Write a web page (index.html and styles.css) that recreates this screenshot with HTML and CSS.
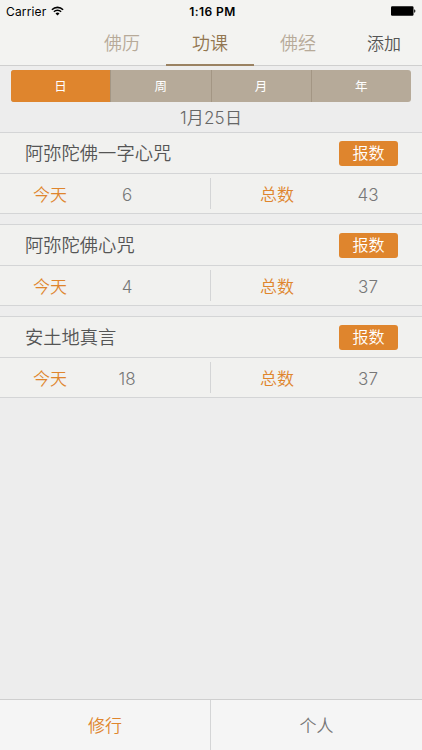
FILE: index.html
```
<!DOCTYPE html>
<html lang="zh-CN">
  <head>
    <meta charset="UTF-8">
    <meta name="viewport" content="width=device-width, initial-scale=1.0">
    <title>功课</title>
    <link rel="stylesheet" href="styles.css">
  </head>

  <body>
    <header class="header">
      <div class="status">
        <div class="carrier">
          <span>Carrier</span>
          <svg class="wifi" width="13" height="10" viewBox="0 0 13 10">
            <path d="M0.9 3.7a8 8 0 0 1 11.2 0M2.9 5.8a5.1 5.1 0 0 1 7.2 0" fill="none" stroke="#000" stroke-width="1.6"/>
            <path d="M6.5 9.4L4.5 7.4a2.9 2.9 0 0 1 4 0z"/>
          </svg>
        </div>
        <div class="clock">1:16 PM</div>
        <svg class="battery" width="26" height="10" viewBox="0 0 26 10">
          <rect x="1" y="0.3" width="22.5" height="9.4" rx="1.2"/>
          <path d="M24.2 3.2c1.6 0.5 1.6 3.1 0 3.6z"/>
        </svg>
      </div>
      <nav class="tabs">
        <a class="tab">佛历</a>
        <a class="tab tab-active">功课</a>
        <a class="tab">佛经</a>
        <a class="add">添加</a>
      </nav>
    </header>

    <main class="main">
      <div class="segments">
        <div class="segment segment-active">日</div>
        <div class="segment">周</div>
        <div class="segment">月</div>
        <div class="segment">年</div>
      </div>
      <div class="date">1月25日</div>

      <section class="card">
        <div class="card-top">
          <span class="card-title">阿弥陀佛一字心咒</span>
          <button class="report">报数</button>
        </div>
        <div class="card-stats">
          <div class="stat"><span class="stat-label">今天</span><span class="stat-value">6</span></div>
          <div class="stat"><span class="stat-label">总数</span><span class="stat-value">43</span></div>
        </div>
      </section>

      <section class="card">
        <div class="card-top">
          <span class="card-title">阿弥陀佛心咒</span>
          <button class="report">报数</button>
        </div>
        <div class="card-stats">
          <div class="stat"><span class="stat-label">今天</span><span class="stat-value">4</span></div>
          <div class="stat"><span class="stat-label">总数</span><span class="stat-value">37</span></div>
        </div>
      </section>

      <section class="card">
        <div class="card-top">
          <span class="card-title">安土地真言</span>
          <button class="report">报数</button>
        </div>
        <div class="card-stats">
          <div class="stat"><span class="stat-label">今天</span><span class="stat-value">18</span></div>
          <div class="stat"><span class="stat-label">总数</span><span class="stat-value">37</span></div>
        </div>
      </section>
    </main>

    <footer class="footer">
      <a class="footer-item footer-active">修行</a>
      <a class="footer-item">个人</a>
    </footer>
  </body>
</html>
```

FILE: styles.css
```
* {
  box-sizing: border-box;
}

body {
  margin: 0;
  height: 750px;
  display: flex;
  flex-direction: column;
  background: #ededed;
  color: #666;
  font-family: Inter, "Noto Sans CJK SC", sans-serif;
  font-weight: 350;
  overflow: hidden;
}

.header {
  height: 66px;
  background: #f3f3f1;
  border-bottom: 1px solid #cfcfcf;
}

.status {
  height: 22px;
  padding: 0 6px;
  display: grid;
  grid-template-columns: 1fr auto 1fr;
  align-items: center;
  color: #000;
  font-size: 12px;
}

.carrier {
  display: flex;
  align-items: center;
  gap: 5px;
  font-weight: 400;
  letter-spacing: 0.15px;
}

.clock {
  padding-left: 3px;
  font-weight: 600;
  letter-spacing: 0.4px;
}

.battery {
  justify-self: end;
}

.tabs {
  height: 44px;
  padding-left: 78px;
  display: flex;
}

.tab {
  width: 88px;
  line-height: 44px;
  text-align: center;
  font-size: 18px;
  color: #b7aa99;
}

.tab-active {
  color: #927650;
  border-bottom: 2px solid #9a8262;
}

.add {
  margin-left: 25px;
  line-height: 44px;
  font-size: 17px;
  color: #555;
}

.main {
  flex: 1;
}

.segments {
  height: 32px;
  margin: 4px 11px 0;
  display: flex;
  border-radius: 3px;
  overflow: hidden;
  background: #b6aa99;
}

.segment {
  flex: 1;
  line-height: 33px;
  text-align: center;
  font-size: 12.5px;
  font-weight: 400;
  color: #fff;
  border-right: 1px solid #a39684;
}

.segment:last-child {
  border-right: 0;
}

.segment-active {
  background: #df852d;
}

.date {
  height: 30px;
  line-height: 32px;
  text-align: center;
  font-size: 17px;
  letter-spacing: 0.2px;
}

.card {
  height: 82px;
  margin-bottom: 10px;
  background: #f1f1ef;
  border-top: 1px solid #d4d5d6;
  border-bottom: 1px solid #d4d5d6;
}

.card-top {
  height: 40px;
  padding: 0 24px 0 25px;
  display: flex;
  align-items: center;
  justify-content: space-between;
}

.card-title {
  padding-bottom: 2px;
  font-size: 18.3px;
  color: #555;
}

.report {
  width: 59px;
  height: 25px;
  margin-top: 1px;
  padding: 0;
  border: 0;
  border-radius: 3px;
  background: #df852d;
  color: #fff;
  font-family: inherit;
  font-size: 16px;
  font-weight: 350;
  line-height: 25px;
}

.card-stats {
  height: 40px;
  padding: 4px 0;
  display: flex;
  border-top: 1px solid #d4d5d6;
}

.stat {
  width: 211px;
  padding-left: 33px;
  display: flex;
  align-items: center;
}

.stat + .stat {
  padding-left: 49px;
}

.stat:first-child {
  border-right: 1px solid #d4d5d6;
}

.stat-label {
  width: 34px;
  font-size: 17px;
  color: #df852d;
}

.stat-value {
  width: 60px;
  margin-left: 30px;
  padding-top: 2px;
  text-align: center;
  font-size: 17px;
  color: #777;
}

.stat + .stat .stat-value {
  margin-left: 44px;
}

.footer {
  height: 51px;
  display: flex;
  background: #f5f5f5;
  border-top: 1px solid #cfcfcf;
}

.footer-item {
  width: 211px;
  line-height: 53px;
  text-align: center;
  font-size: 17px;
  color: #777;
}

.footer-active {
  color: #df852d;
  border-right: 1px solid #d4d5d6;
}
```
